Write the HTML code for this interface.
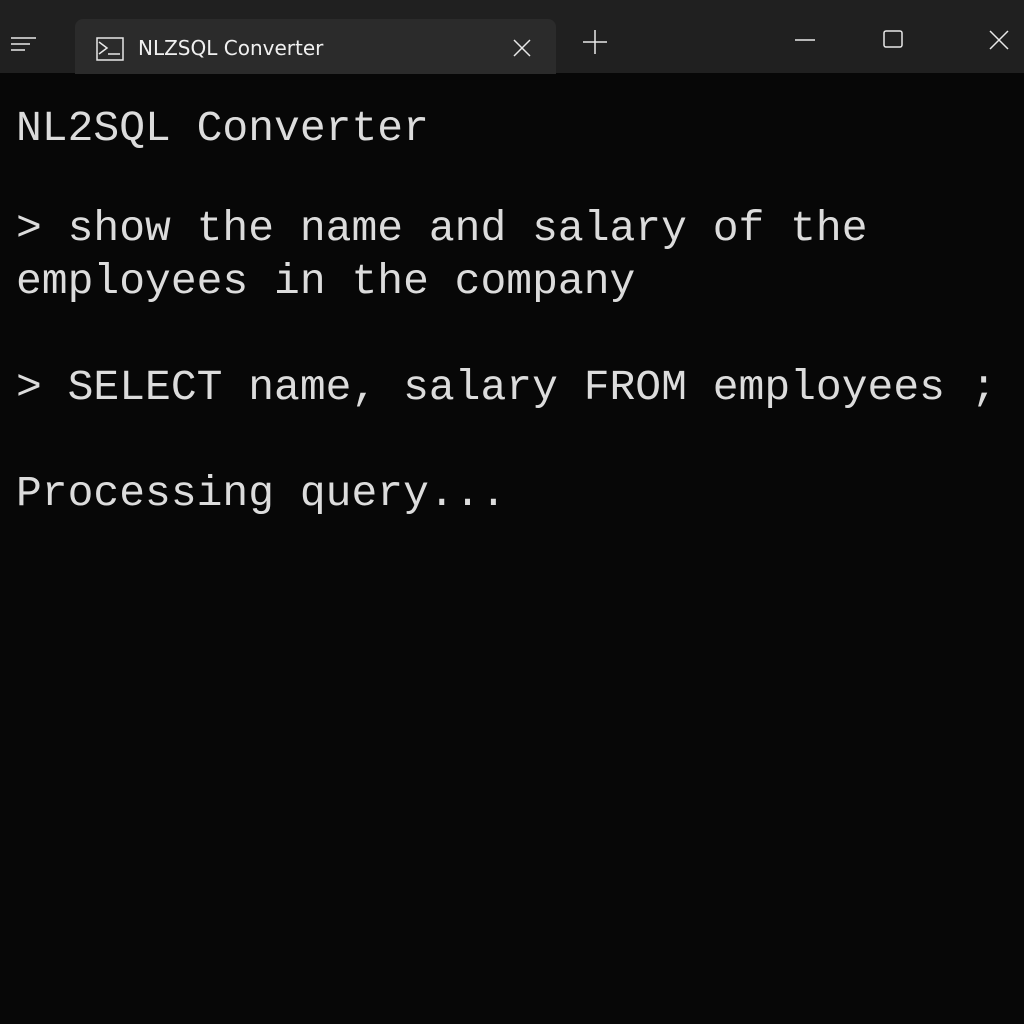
<!DOCTYPE html>
<html><head><style>
html,body{margin:0;padding:0;width:1024px;height:1024px;overflow:hidden;background:#070707;}
.bar{position:absolute;left:0;top:0;width:1024px;height:73px;background:#202020;}
.tab{position:absolute;left:75px;top:19px;width:481px;height:55px;background:#2b2b2b;border-radius:8px 8px 0 0;}
.tabt{position:absolute;left:138px;top:36px;color:#f0f0f0;font:20px "DejaVu Sans","Liberation Sans",sans-serif;}
.term{position:absolute;left:16px;top:0;color:#dcdcdc;font:43px/53px "Liberation Mono",monospace;white-space:pre;}
svg{position:absolute;}
</style></head><body>
<div class="bar"></div>
<div class="tab"></div>
<svg style="left:0;top:0" width="1024" height="73" stroke="#e8e8e8" fill="none" stroke-width="1.5">
<path d="M11 38H36M11 44H30M11 50H25"/>
<rect x="97" y="38" width="26" height="22"/>
<path d="M99 42l8 6-8 6M108 54h12"/>
<path d="M514 40l16 16M530 40l-16 16"/>
<path d="M595 30v24M583 42h24"/>
<path d="M795 40h20"/>
<rect x="884" y="31" width="18" height="16" rx="2"/>
<path d="M990 31l18 18M1008 31l-18 18"/>
</svg>
<div class="tabt">NLZSQL Converter</div>
<div class="term" style="top:102px">NL2SQL Converter</div>
<div class="term" style="top:202px">&gt; show the name and salary of the
employees in the company</div>
<div class="term" style="top:361px">&gt; SELECT name, salary FROM employees ;</div>
<div class="term" style="top:467px">Processing query...</div>
</body></html>
